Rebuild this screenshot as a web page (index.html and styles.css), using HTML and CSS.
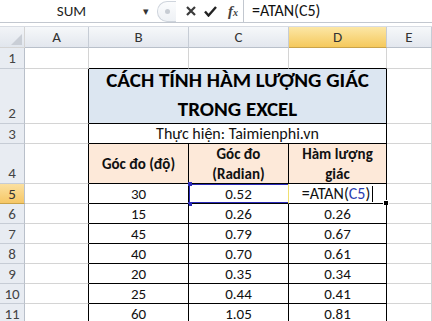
FILE: index.html
```html
<!DOCTYPE html>
<html>
<head>
    <title>ATAN</title>
    <link rel="stylesheet" href="styles.css">
</head>
<body>
    <div class="formula-bar">
        <div class="name-box">SUM</div>
        <div class="name-drop">&#9662;</div>
        <div class="fb-tools">
            <div class="grip"><span></span></div>
            <svg class="tool-x" width="10" height="10" viewBox="0 0 10 10">
                <path d="M1 1 L9 9 M9 1 L1 9" stroke="#3a3a3a" stroke-width="2.2" fill="none"/>
            </svg>
            <svg class="tool-ok" width="13" height="11" viewBox="0 0 13 11">
                <path d="M1 5.5 L4.5 9.5 L12 1" stroke="#222" stroke-width="2.4" fill="none"/>
            </svg>
            <span class="fx">f<small>x</small></span>
        </div>
        <div class="fb-input">=ATAN(C5)</div>
    </div>

    <div class="sheet">
        <!-- column headers -->
        <div class="corner"></div>
        <div class="hd">A</div>
        <div class="hd">B</div>
        <div class="hd">C</div>
        <div class="hd hd-on">D</div>
        <div class="hd">E</div>

        <!-- row 1 -->
        <div class="rh">1</div>
        <div class="c"></div>
        <div class="c top"></div>
        <div class="c top"></div>
        <div class="c top"></div>
        <div class="c"></div>

        <!-- row 2 -->
        <div class="rh bottom">2</div>
        <div class="c edge"></div>
        <div class="t title">CÁCH TÍNH HÀM LƯỢNG GIÁC<br>TRONG EXCEL</div>
        <div class="c"></div>

        <!-- row 3 -->
        <div class="rh">3</div>
        <div class="c edge"></div>
        <div class="t credit">Thực hiện: Taimienphi.vn</div>
        <div class="c"></div>

        <!-- row 4 -->
        <div class="rh bottom">4</div>
        <div class="c edge"></div>
        <div class="t head">Góc đo (độ)</div>
        <div class="t head">Góc đo<br>(Radian)</div>
        <div class="t head">Hàm lượng<br>giác</div>
        <div class="c"></div>

        <!-- row 5 -->
        <div class="rh rh-on">5</div>
        <div class="c edge"></div>
        <div class="t">30</div>
        <div class="t ref">0.52<i class="h1"></i><i class="h2"></i></div>
        <div class="t active">=ATAN(<span class="blue">C5</span>)<span class="caret"></span><i class="fill"></i></div>
        <div class="c"></div>

        <div class="rh">6</div>
        <div class="c edge"></div>
        <div class="t">15</div>
        <div class="t">0.26</div>
        <div class="t">0.26</div>
        <div class="c"></div>

        <div class="rh">7</div>
        <div class="c edge"></div>
        <div class="t">45</div>
        <div class="t">0.79</div>
        <div class="t">0.67</div>
        <div class="c"></div>

        <div class="rh">8</div>
        <div class="c edge"></div>
        <div class="t">40</div>
        <div class="t">0.70</div>
        <div class="t">0.61</div>
        <div class="c"></div>

        <div class="rh">9</div>
        <div class="c edge"></div>
        <div class="t">20</div>
        <div class="t">0.35</div>
        <div class="t">0.34</div>
        <div class="c"></div>

        <div class="rh">10</div>
        <div class="c edge"></div>
        <div class="t">25</div>
        <div class="t">0.44</div>
        <div class="t">0.41</div>
        <div class="c"></div>

        <div class="rh">11</div>
        <div class="c edge"></div>
        <div class="t">60</div>
        <div class="t">1.05</div>
        <div class="t">0.81</div>
        <div class="c"></div>
    </div>
</body>
</html>
```

FILE: styles.css
```css
body {
    margin: 0;
    width: 432px;
    height: 321px;
    overflow: hidden;
    background: #fff;
    font-family: Carlito, Lato, "Liberation Sans", sans-serif;
    color: #111;
}

/* Formula bar */
.formula-bar {
    display: flex;
    align-items: center;
    height: 22px;
    border-bottom: 1px solid #c2c7cf;
    background: #fff;
}

.name-box {
    width: 143px;
    text-align: center;
    font-size: 15px;
    color: #222;
}

.name-drop {
    width: 14px;
    font-size: 11px;
    color: #333;
}

.fb-tools {
    display: flex;
    align-items: center;
    height: 22px;
    width: 86px;
}

.grip {
    width: 18px;
    height: 19px;
    border: 1px solid #cfd5dd;
    border-right: none;
    border-radius: 10px 0 0 10px;
    background: linear-gradient(#fbfcfd, #eef1f5);
    display: flex;
    align-items: center;
    justify-content: center;
}

.grip span {
    width: 5px;
    height: 5px;
    border-radius: 50%;
    background: #c7ccd3;
}

.tool-x {
    margin-left: 10px;
}

.tool-ok {
    margin-left: 8px;
}

.fx {
    margin-left: 11px;
    font-family: "Liberation Serif", serif;
    font-style: italic;
    font-weight: bold;
    font-size: 15px;
    color: #444;
}

.fx small {
    font-size: 10px;
}

.fb-input {
    flex: 1;
    height: 22px;
    line-height: 22px;
    border-left: 1px solid #c2c7cf;
    padding-left: 8px;
    font-size: 16px;
    color: #111;
}

/* Sheet grid */
.sheet {
    margin-top: 3px;
    display: grid;
    grid-template-columns: 25px 64px 100px 100px 98px 45px;
    grid-template-rows: 21px 21px 55px 20px 40px repeat(7, 20px);
    border-top: 1px solid #d8dce3;
}

.sheet > div {
    box-sizing: border-box;
    border-right: 1px solid #d4d4d4;
    border-bottom: 1px solid #d4d4d4;
    display: flex;
    align-items: center;
    justify-content: center;
    text-align: center;
    font-size: 15px;
}

.corner {
    background: linear-gradient(#f2f4f7, #e1e6ed);
    position: relative;
}

.corner::after {
    content: "";
    position: absolute;
    right: 2px;
    bottom: 2px;
    border-left: 11px solid transparent;
    border-bottom: 11px solid #c9ced6;
}

.sheet > .hd {
    background: linear-gradient(#f6f8fa, #e3e7ee);
    border-right-color: #c6ccd5;
    border-bottom-color: #b9c0ca;
    color: #333;
    font-size: 15px;
}

.sheet > .hd-on {
    background: linear-gradient(#fce7a6, #f5c95c);
    border-bottom-color: #c9a34a;
}

.sheet > .rh {
    background: #e8ecf2;
    border-right-color: #b9c0ca;
    border-bottom-color: #c6ccd5;
    color: #444;
    font-size: 15px;
}

.sheet > .bottom {
    align-items: flex-end;
    padding-bottom: 1px;
}

.sheet > .rh-on {
    background: linear-gradient(#fbe0a0, #f6c766);
    border-bottom-color: #c9a34a;
    color: #333;
}

.sheet > .top {
    border-bottom-color: #000;
}

.sheet > .edge {
    border-right-color: #000;
}

.sheet > .t {
    border-right-color: #000;
    border-bottom-color: #000;
    position: relative;
}

.sheet > .title {
    grid-column: span 3;
    background: #dce6f1;
    font-weight: bold;
    font-size: 21px;
    line-height: 29px;
    padding-bottom: 3px;
    color: #000;
}

.sheet > .credit {
    grid-column: span 3;
    font-size: 16px;
}

.sheet > .head {
    background: #fde9d9;
    font-weight: bold;
    font-size: 15px;
    line-height: 20px;
}

/* referenced cell C5 */
.sheet > .ref {
    box-shadow: inset 1px 1px 0 #2a2ab8, inset 0 -1px 0 #2a2ab8;
    border-right: 1px solid #f0e070;
}

.ref i {
    position: absolute;
    left: -1px;
    width: 4px;
    height: 4px;
    background: #2a2ab8;
}

.ref .h1 {
    top: -2px;
}

.ref .h2 {
    bottom: -3px;
}

/* active cell D5 */
.sheet > .active {
    font-size: 16px;
}

.active .blue {
    color: #2a3cb0;
}

.caret {
    display: inline-block;
    width: 1px;
    height: 16px;
    margin-left: 2px;
    background: #000;
}

.fill {
    position: absolute;
    right: -3px;
    bottom: -3px;
    width: 4px;
    height: 4px;
    background: #000;
    border: 1px solid #fff;
}
```
